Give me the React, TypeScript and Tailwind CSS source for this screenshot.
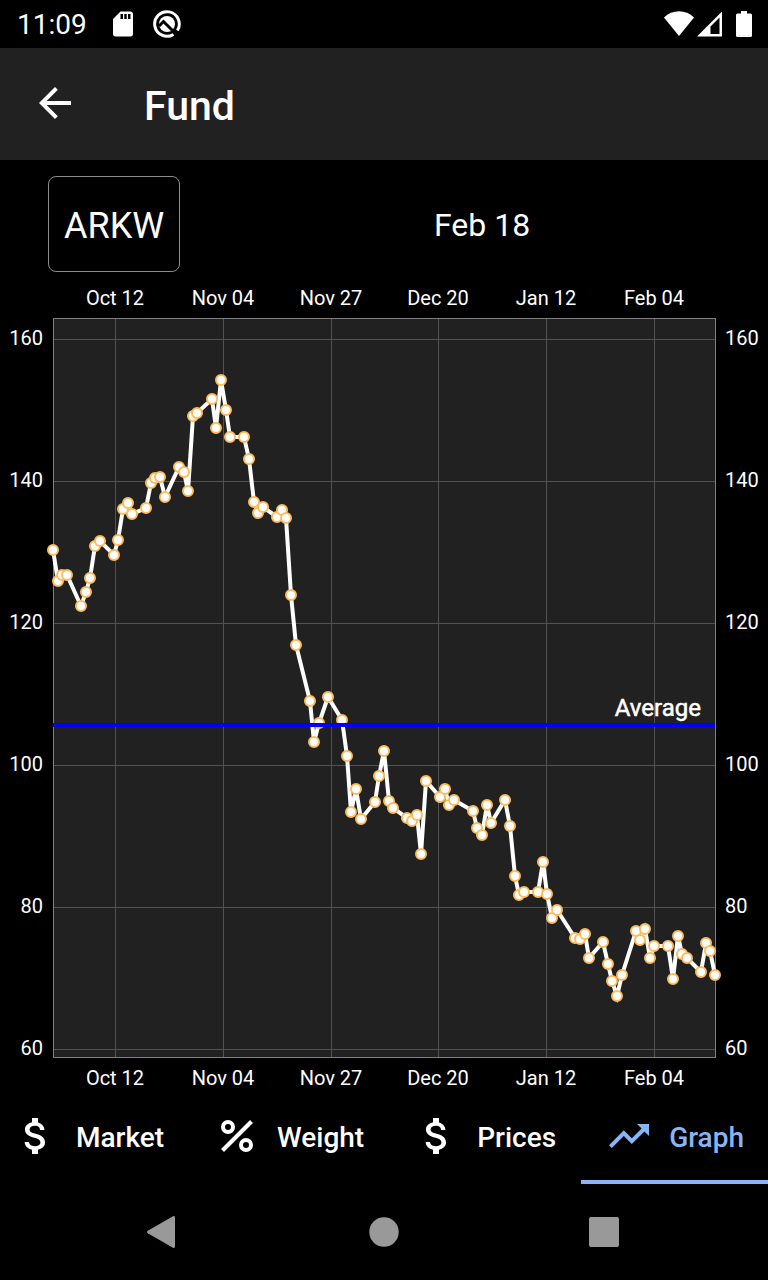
import React from 'react';
import { MdArrowBack, MdAttachMoney, MdSdCard, MdTrendingUp } from 'react-icons/md';

const PLOT = { left: 53, right: 715, top: 318, bottom: 1058 };

const X_TICKS = [
  { label: 'Oct 12', x: 115 },
  { label: 'Nov 04', x: 223 },
  { label: 'Nov 27', x: 331 },
  { label: 'Dec 20', x: 438 },
  { label: 'Jan 12', x: 546 },
  { label: 'Feb 04', x: 654 },
];

const Y_TICKS = [160, 140, 120, 100, 80, 60];

const yFor = (price: number) => 339 + (160 - price) * 7.1;

const POINTS: [number, number][] = [
  [53, 550], [58, 581], [62, 575], [67, 575], [81, 606], [86, 592], [90, 578], [95, 546],
  [100, 541], [114, 555], [118, 540], [123, 509], [128, 503], [132, 514], [146, 508],
  [151, 483], [155, 478], [160, 477], [165, 497], [179, 467], [184, 472], [188, 491],
  [193, 416], [197, 413], [212, 399], [216, 428], [221, 380], [226, 410], [230, 437],
  [244, 437], [249, 459], [254, 502], [258, 513], [263, 507], [277, 517], [282, 510],
  [286, 518], [291, 595], [296, 645], [310, 701], [314, 742], [319, 723], [328, 697],
  [342, 720], [347, 756], [351, 812], [356, 789], [361, 819], [375, 802], [379, 776],
  [384, 751], [389, 801], [393, 808], [407, 818], [412, 821], [417, 815], [421, 854],
  [426, 781], [440, 797], [445, 789], [449, 805], [454, 800], [473, 811], [477, 828],
  [482, 835], [487, 805], [491, 823], [505, 800], [510, 826], [515, 876], [519, 895],
  [524, 892], [538, 892], [543, 862], [547, 894], [552, 918], [557, 910], [575, 938],
  [580, 939], [585, 934], [589, 958], [603, 942], [608, 964], [612, 981], [617, 996],
  [622, 975], [636, 931], [640, 940], [645, 929], [650, 958], [654, 946], [668, 946],
  [673, 979], [678, 936], [682, 954], [687, 958], [701, 972], [706, 943], [710, 951],
  [715, 975],
];

const PercentIcon: React.FC = () => (
  <svg viewBox="0 0 48 48" className="w-12 h-12" fill="none" stroke="currentColor" strokeWidth="4">
    <circle cx="15" cy="15" r="5" />
    <circle cx="33" cy="33" r="5" />
    <path d="M9.5 38.5L38.5 9.5" />
  </svg>
);

const TABS = [
  { name: 'Market', icon: <MdAttachMoney className="w-12 h-12" /> },
  { name: 'Weight', icon: <PercentIcon /> },
  { name: 'Prices', icon: <MdAttachMoney className="w-12 h-12" /> },
  { name: 'Graph', icon: <MdTrendingUp className="w-12 h-12" />, active: true },
];

const StatusBar: React.FC = () => (
  <div className="h-12 pl-[17px] pr-4 flex items-center justify-between">
    <div className="flex items-center">
      <span className="pt-0.5 text-[28px] leading-8">11:09</span>
      <MdSdCard className="w-[30px] h-[30px] ml-[21px]" />
      <svg viewBox="0 0 28 28" className="w-7 h-7 ml-[15px]" fill="none" stroke="currentColor">
        <path d="M20.5 24.4A12.3 12.3 0 1 1 24.4 20.5" strokeWidth="3" />
        <circle cx="14" cy="14" r="8" fill="currentColor" stroke="none" />
        <path d="M6 16L10.5 11.5L23.5 24.5" stroke="black" strokeWidth="3" />
      </svg>
    </div>
    <div className="flex items-center">
      <svg viewBox="0 0 30 26" className="w-[30px] h-[26px]" fill="currentColor">
        <path d="M0 6.5C8 -1.8 22 -1.8 30 6.5L15 25Z" />
      </svg>
      <svg viewBox="0 0 26 26" className="w-[26px] h-[26px] ml-[3px]" fill="currentColor">
        <path fillRule="evenodd" d="M0 25.5L25 .5V25.5ZM13.5 23H22.5V6.5L13.5 15.5Z" />
      </svg>
      <svg viewBox="0 0 16 26" className="w-4 h-[26px] ml-[13px]" fill="currentColor">
        <path d="M5 0H11V2.5H14.5Q16 2.5 16 4V24.5Q16 26 14.5 26H1.5Q0 26 0 24.5V4Q0 2.5 1.5 2.5H5Z" />
      </svg>
    </div>
  </div>
);

const PriceChart: React.FC = () => (
  <svg viewBox="0 272 768 820" className="w-full h-auto" fill="white" role="img" aria-label="ARKW">
    <rect
      x={PLOT.left + 0.5}
      y={PLOT.top + 0.5}
      width={PLOT.right - PLOT.left}
      height={PLOT.bottom - PLOT.top - 1}
      fill="#212121"
    />

    {/* Grid */}
    <g stroke="#525252">
      {X_TICKS.map(({ x }) => (
        <line key={x} x1={x + 0.5} x2={x + 0.5} y1={PLOT.top} y2={PLOT.bottom} />
      ))}
      {Y_TICKS.map((price) => (
        <line
          key={price}
          x1={PLOT.left}
          x2={PLOT.right}
          y1={yFor(price) + 0.5}
          y2={yFor(price) + 0.5}
        />
      ))}
    </g>
    <rect
      x={PLOT.left + 0.5}
      y={PLOT.top + 0.5}
      width={PLOT.right - PLOT.left}
      height={PLOT.bottom - PLOT.top - 1}
      fill="none"
      stroke="#808080"
    />

    {/* Axis labels */}
    <g fontSize="20">
      {X_TICKS.map(({ label, x }) => (
        <g key={label} textAnchor="middle">
          <text x={x} y={305}>{label}</text>
          <text x={x} y={1085}>{label}</text>
        </g>
      ))}
      {Y_TICKS.map((price) => (
        <g key={price}>
          <text x={43} y={yFor(price) + 6} textAnchor="end">{price}</text>
          <text x={725} y={yFor(price) + 6}>{price}</text>
        </g>
      ))}
    </g>

    {/* Series */}
    <polyline
      points={POINTS.map((p) => p.join(',')).join(' ')}
      fill="none"
      stroke="white"
      strokeWidth="4"
    />
    <g stroke="#ffbb5c" strokeWidth="2">
      {POINTS.map(([x, y]) => (
        <circle key={x} cx={x} cy={y} r="5" />
      ))}
    </g>

    {/* Average */}
    <line x1={PLOT.left} x2={PLOT.right} y1={725} y2={725} stroke="#0000ff" strokeWidth="4" />
    <text x={701} y={716} fontSize="24" textAnchor="end" stroke="white" strokeWidth="0.5">
      Average
    </text>
  </svg>
);

const App: React.FC = () => {
  return (
    <div className="min-h-screen bg-black text-white font-[Roboto,sans-serif] flex flex-col">
      <StatusBar />

      {/* Header */}
      <header className="h-28 px-[31px] bg-[#212121] flex items-center gap-[65px]">
        <button type="button" aria-label="Back" className="pb-0.5">
          <MdArrowBack className="w-12 h-12" />
        </button>
        <h1 className="pt-1 text-[41px] leading-12 font-medium">Fund</h1>
      </header>

      <main>
        <div className="pl-12 pt-4 flex items-center gap-4">
          <button
            type="button"
            className="h-24 px-[15px] pt-1 border border-[#8c8c8c] rounded-lg text-4xl"
          >
            ARKW
          </button>
          <p className="flex-1 pt-0.5 text-center text-[32px] leading-10">Feb 18</p>
        </div>
        <PriceChart />
      </main>

      {/* Tabs */}
      <nav className="flex justify-end gap-px overflow-hidden">
        {TABS.map(({ name, icon, active }) => (
          <button
            key={name}
            type="button"
            className={`h-[92px] px-6 shrink-0 flex items-center gap-4 text-[28px] font-medium border-b-4 ${
              active ? 'text-[#8ab4f8] border-b-[#8ab4f8]' : 'border-b-transparent'
            }`}
          >
            {icon}
            <span className="pt-1">{name}</span>
          </button>
        ))}
      </nav>

      {/* System navigation */}
      <div className="h-24 px-[54px] grid grid-cols-3 place-items-center text-[#999999]">
        <button type="button" aria-label="Back">
          <svg viewBox="0 0 34 34" className="w-[34px] h-[34px]" fill="currentColor">
            <path d="M.8 15.8L26 1.2Q28 .5 28 2.5V31.5Q28 33.5 26 32.8L.8 18.2Q-.8 17 .8 15.8Z" />
          </svg>
        </button>
        <button type="button" aria-label="Home">
          <svg viewBox="0 0 30 30" className="w-[30px] h-[30px]" fill="currentColor">
            <circle cx="15" cy="15" r="14.7" />
          </svg>
        </button>
        <button type="button" aria-label="Recent apps">
          <svg viewBox="0 0 30 30" className="w-[30px] h-[30px]" fill="currentColor">
            <rect width="30" height="30" rx="2" />
          </svg>
        </button>
      </div>
    </div>
  );
};

export default App;
